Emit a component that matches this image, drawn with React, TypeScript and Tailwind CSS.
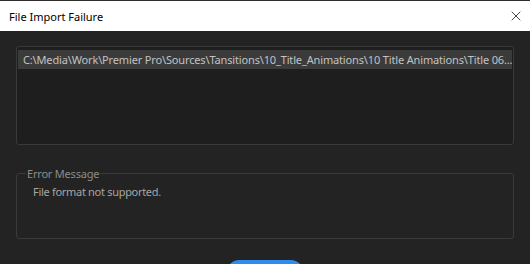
import React from "react";
import { X } from "lucide-react";

const font = { fontFamily: '"Noto Sans", "Open Sans", sans-serif' };

const FileImportFailure = () => {
  return (
    <div
      className="w-[530px] h-[264px] overflow-hidden bg-[#232323] flex flex-col"
      style={font}
    >
      {/* title bar */}
      <div className="h-[31px] shrink-0 bg-white border-t border-[#2e2e2e] flex items-center justify-between pl-[9px] pr-[6px]">
        <span className="text-[11px] text-black leading-none">File Import Failure</span>
        <X className="w-[16px] h-[16px] text-black" strokeWidth={1.1} />
      </div>

      <div className="flex flex-col px-[16px] pt-[15px]">
        {/* file list */}
        <div className="h-[99px] border border-[#3a3a3a] rounded-[3px] bg-[#1e1e1e] pt-[3px] px-[1px]">
          <div className="h-[19px] bg-[#3b3b3b] flex items-center pl-[5px] overflow-hidden">
            <span className="text-[11px] tracking-[-0.15px] text-[#c2c2c2] whitespace-nowrap leading-none">
              C:\Media\Work\Premier Pro\Sources\Tansitions\10_Title_Animations\10 Title Animations\Title 06...
            </span>
          </div>
        </div>

        {/* error message group */}
        <div className="mt-[28px] h-[66px] border border-[#3a3a3a] rounded-[3px] flex flex-col">
          <div className="-mt-[8px] pl-[9px] flex">
            <span className="px-[1px] bg-[#232323] text-[11px] tracking-[-0.2px] text-[#8c8c8c] leading-[16px]">
              Error Message
            </span>
          </div>
          <div className="mt-[2px] pl-[16px] text-[11px] tracking-[-0.3px] text-[#a6a6a6] leading-[16px]">
            File format not supported.
          </div>
        </div>

        {/* button */}
        <div className="flex justify-center mt-[21px]">
          <button className="w-[76px] h-[28px] rounded-[12px] bg-[#2d8cec]" />
        </div>
      </div>
    </div>
  );
};

export default function App() {
  return <FileImportFailure />;
}
